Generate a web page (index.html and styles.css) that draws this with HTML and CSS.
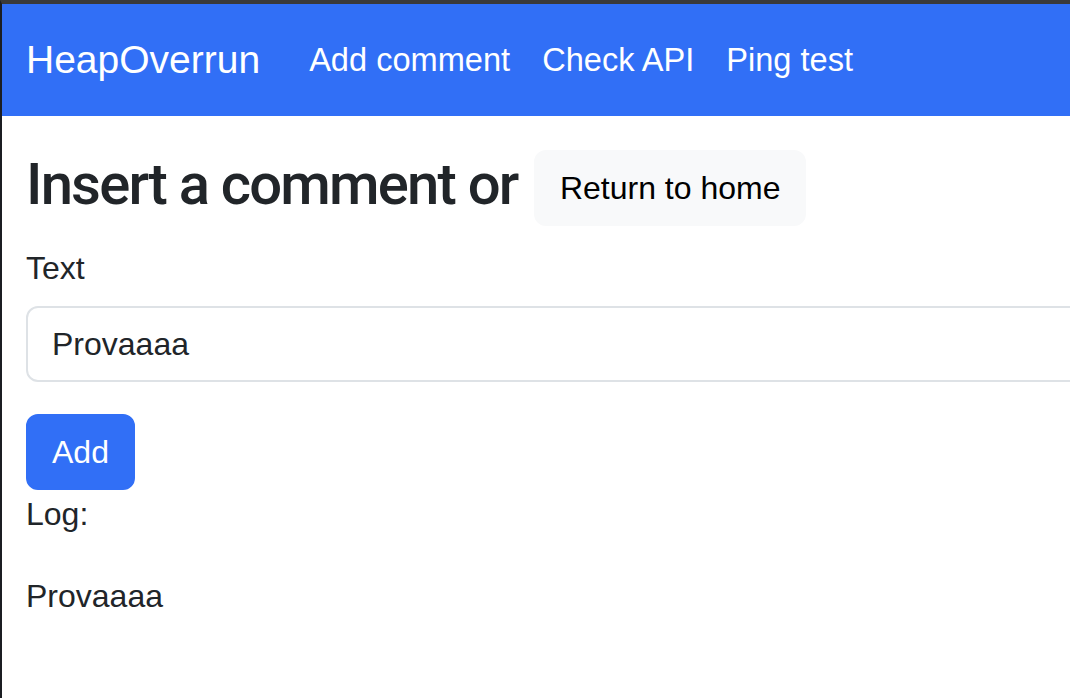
FILE: index.html
```html
<!DOCTYPE html>
<html lang="en">
<head>
<meta charset="utf-8">
<title>HeapOverrun</title>
<link rel="stylesheet" href="styles.css">
</head>
<body>
<div class="frame">
  <nav class="navbar">
    <a class="brand" href="#">HeapOverrun</a>
    <ul class="nav">
      <li><a class="nav-link" href="#">Add comment</a></li>
      <li><a class="nav-link" href="#">Check API</a></li>
      <li><a class="nav-link" href="#">Ping test</a></li>
    </ul>
  </nav>
  <main class="container">
    <h1 class="title"><span class="title-text">Insert a comment or</span> <a class="btn btn-light" href="#">Return to home</a></h1>
    <form class="form">
      <div class="field">
        <label class="label" for="text">Text</label>
        <input class="input" id="text" type="text" value="Provaaaa">
      </div>
      <button class="btn btn-primary" type="button">Add</button>
    </form>
    <p class="log-title">Log:</p>
    <p class="log-entry">Provaaaa</p>
  </main>
</div>
</body>
</html>
```

FILE: styles.css
```css
html, body {
  margin: 0;
  padding: 0;
  height: 100%;
}
body {
  background: #ffffff;
  font-family: "Liberation Sans", Arial, sans-serif;
  color: #212529;
  font-size: 32px;
  line-height: 1.5;
}
.frame {
  box-sizing: border-box;
  min-height: 100%;
  border-top: 4px solid #3a3a3a;
  border-left: 2px solid #1b1d22;
  overflow: hidden;
}
.navbar {
  display: flex;
  align-items: center;
  height: 112px;
  padding: 0 24px;
  background: #316ff6;
}
.brand {
  color: #ffffff;
  text-decoration: none;
  font-size: 39px;
  line-height: 1.5;
  margin-right: 33px;
}
.nav {
  display: flex;
  list-style: none;
  margin: 0;
  padding: 0;
}
.nav-link {
  display: block;
  padding: 0 16px;
  color: #ffffff;
  text-decoration: none;
  font-size: 32.6px;
  line-height: 48px;
}
.container {
  padding: 33px 24px 0;
}
.title {
  margin: 0 0 18px;
  font-size: 59px;
  font-weight: 500;
  line-height: 1.2;
  color: #212529;
}
.title-text {
  font-family: Roboto, "Liberation Sans", sans-serif;
  font-size: 58px;
  letter-spacing: -1.8px;
}
.btn {
  display: inline-block;
  box-sizing: border-box;
  padding: 12px 24px;
  font-family: "Liberation Sans", Arial, sans-serif;
  font-size: 32px;
  font-weight: 400;
  line-height: 48px;
  border: 2px solid transparent;
  border-radius: 12px;
  text-decoration: none;
  vertical-align: middle;
  cursor: pointer;
}
.btn-light {
  background: #f8f9fa;
  border-color: #f8f9fa;
  color: #000000;
}
.btn-primary {
  background: #316ff6;
  border-color: #316ff6;
  color: #ffffff;
}
.form {
  margin: 0;
}
.field {
  margin-bottom: 32px;
}
.label {
  display: block;
  margin-bottom: 14px;
}
.input {
  display: block;
  box-sizing: border-box;
  width: calc(100% + 40px);
  height: 76px;
  padding: 12px 24px;
  font-family: inherit;
  font-size: 32px;
  line-height: 48px;
  color: #212529;
  background: #ffffff;
  border: 2px solid #dee2e6;
  border-radius: 12px;
  outline: none;
}
.log-title {
  margin: 0 0 34px;
}
.log-entry {
  margin: 0 0 32px;
}
```
